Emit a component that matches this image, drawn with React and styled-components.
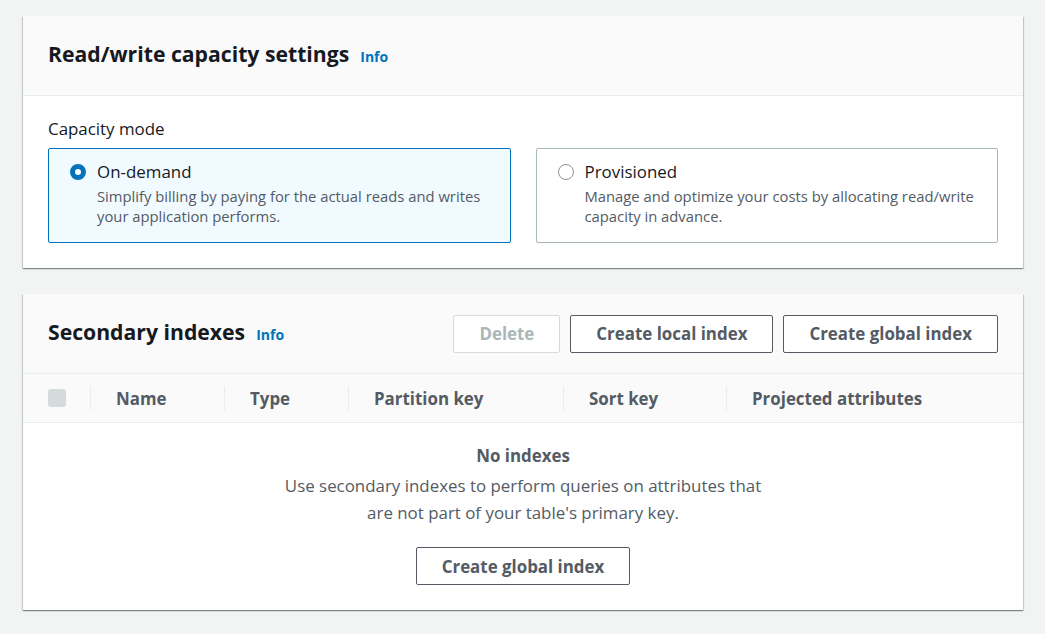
import React from "react";
import styled, { createGlobalStyle } from "styled-components";

const Global = createGlobalStyle`
  html, body { margin: 0; padding: 0; background: #f2f3f3; }
  body { font-family: "Open Sans", "Noto Sans", Arial, sans-serif; color: #16191f; }
  * { box-sizing: border-box; }
`;

const Page = styled.div`
  display: flex;
  flex-direction: column;
  gap: 26px;
  padding: 16px 22px 22px 23px;
`;

const Panel = styled.section`
  background: #fff;
  box-shadow: 0 1px 1px 0 rgba(0, 28, 36, 0.3), 1px 1px 1px 0 rgba(0, 28, 36, 0.15),
    -1px 1px 1px 0 rgba(0, 28, 36, 0.15);
`;

const PanelHeader = styled.header`
  display: flex;
  align-items: center;
  justify-content: space-between;
  height: 80px;
  padding: 0 25px;
  background: #fafafa;
  border-bottom: 1px solid #eaeded;
`;

const TitleWrap = styled.div`
  display: flex;
  align-items: baseline;
  gap: 11px;
  margin-bottom: 4px;
`;

const Title = styled.h2`
  margin: 0;
  font-size: 21.2px;
  line-height: 28px;
  font-weight: 700;
  color: #16191f;
`;

const InfoLink = styled.a`
  font-size: 14px;
  font-weight: 700;
  color: #0073bb;
  text-decoration: none;
`;

const PanelBody = styled.div`
  padding: 21px 25px 25px;
`;

const Label = styled.div`
  font-size: 16.9px;
  line-height: 24px;
  margin-bottom: 7px;
`;

const Tiles = styled.div`
  display: grid;
  grid-template-columns: 1fr 1fr;
  gap: 25px;
`;

const Tile = styled.label`
  display: flex;
  gap: 11px;
  padding: 12px 20px 15px 21px;
  border: 1px solid ${(p) => (p.$selected ? "#0073bb" : "#aab7b8")};
  background: ${(p) => (p.$selected ? "#f1faff" : "#fff")};
  border-radius: 2px;
  min-height: 95px;
`;

const Radio = styled.span`
  flex: none;
  width: 16px;
  height: 16px;
  margin-top: 3px;
  border-radius: 50%;
  background: #fff;
  border: ${(p) => (p.$checked ? "5px solid #0073bb" : "1.5px solid #879596")};
`;

const TileText = styled.div`
  display: flex;
  flex-direction: column;
`;

const TileTitle = styled.span`
  font-size: 16.9px;
  line-height: 22px;
  color: #16191f;
`;

const TileDesc = styled.span`
  font-size: 14.8px;
  line-height: 20px;
  color: #545b64;
  margin-top: 3px;
`;

const Actions = styled.div`
  display: flex;
  gap: 10px;
`;

const Button = styled.button`
  font-family: inherit;
  height: 38px;
  padding: 0 25px;
  font-size: 16.9px;
  font-weight: 700;
  border-radius: 2px;
  background: #fff;
  color: ${(p) => (p.disabled ? "#aab7b8" : "#545b64")};
  border: 1px solid ${(p) => (p.disabled ? "#d5dbdb" : "#545b64")};
  cursor: ${(p) => (p.disabled ? "default" : "pointer")};
`;

const HeadRow = styled.div`
  display: grid;
  grid-template-columns: 42px 134px 124px 215px 163px 1fr;
  align-items: center;
  height: 49px;
  padding: 0 25px;
  background: #fafafa;
  border-bottom: 1px solid #eaeded;
`;

const Checkbox = styled.span`
  width: 18px;
  height: 18px;
  border-radius: 3px;
  background: #d5dbdb;
`;

const HeadCell = styled.div`
  display: flex;
  align-items: center;
  height: 24px;
  padding-left: 25px;
  border-left: 1px solid #eaeded;
  font-size: 16.9px;
  font-weight: 700;
  color: #545b64;
`;

const Empty = styled.div`
  display: flex;
  flex-direction: column;
  align-items: center;
  padding: 21px 25px 25px;
  text-align: center;
  color: #545b64;
`;

const EmptyTitle = styled.div`
  font-size: 16.9px;
  line-height: 24px;
  font-weight: 700;
`;

const EmptyDesc = styled.p`
  margin: 4px 0 21px;
  font-size: 16.9px;
  line-height: 27px;
`;

const columns = ["Name", "Type", "Partition key", "Sort key", "Projected attributes"];

export default function App() {
  return (
    <>
      <Global />
      <Page>
        <Panel>
          <PanelHeader>
            <TitleWrap>
              <Title>Read/write capacity settings</Title>
              <InfoLink href="#">Info</InfoLink>
            </TitleWrap>
          </PanelHeader>
          <PanelBody>
            <Label>Capacity mode</Label>
            <Tiles>
              <Tile $selected>
                <Radio $checked />
                <TileText>
                  <TileTitle>On-demand</TileTitle>
                  <TileDesc>
                    Simplify billing by paying for the actual reads and writes your application performs.
                  </TileDesc>
                </TileText>
              </Tile>
              <Tile>
                <Radio />
                <TileText>
                  <TileTitle>Provisioned</TileTitle>
                  <TileDesc>
                    Manage and optimize your costs by allocating read/write capacity in advance.
                  </TileDesc>
                </TileText>
              </Tile>
            </Tiles>
          </PanelBody>
        </Panel>

        <Panel>
          <PanelHeader>
            <TitleWrap>
              <Title>Secondary indexes</Title>
              <InfoLink href="#">Info</InfoLink>
            </TitleWrap>
            <Actions>
              <Button disabled>Delete</Button>
              <Button>Create local index</Button>
              <Button>Create global index</Button>
            </Actions>
          </PanelHeader>
          <HeadRow>
            <Checkbox />
            {columns.map((c) => (
              <HeadCell key={c}>{c}</HeadCell>
            ))}
          </HeadRow>
          <Empty>
            <EmptyTitle>No indexes</EmptyTitle>
            <EmptyDesc>
              Use secondary indexes to perform queries on attributes that
              <br />
              are not part of your table's primary key.
            </EmptyDesc>
            <Button>Create global index</Button>
          </Empty>
        </Panel>
      </Page>
    </>
  );
}
